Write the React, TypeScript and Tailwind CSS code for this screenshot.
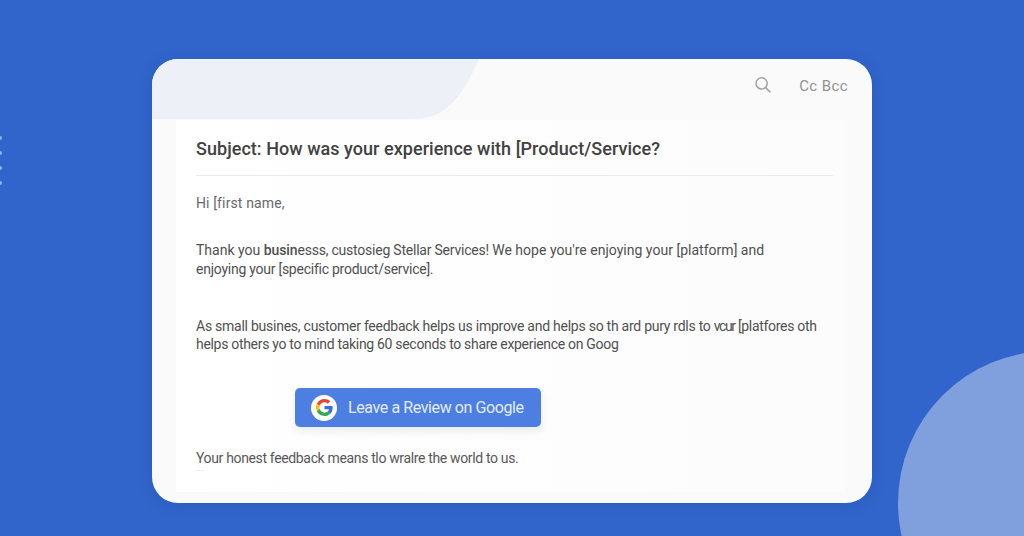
import type React from "react";

interface Segment {
  text: string;
  className: string;
}

type Line = Segment[];

const introLines: Line[] = [
  [
    { text: "Thank you ", className: "tracking-[0px]" },
    { text: "busin", className: "font-medium tracking-[-0.1px]" },
    {
      text: "esss, custosieg Stellar Services! ",
      className: "tracking-[-0.22px]",
    },
    {
      text: "We hope you're enjoying your [platform] and",
      className: "tracking-[0.02px]",
    },
  ],
  [
    {
      text: "enjoying your [specific product/service].",
      className: "tracking-[-0.25px]",
    },
  ],
];

const requestLines: Line[] = [
  [
    {
      text: "As small busines, customer feedback helps us improve and helps ",
      className: "tracking-[-0.25px]",
    },
    { text: "so th ard pury rdls to ", className: "tracking-[-0.26px]" },
    { text: "vcur", className: "tracking-[-1.4px]" },
    { text: " [platfores oth", className: "tracking-[-0.3px]" },
  ],
  [
    {
      text: "helps others yo to mind taking 60 seconds to share experience on Goog",
      className: "tracking-[-0.31px]",
    },
  ],
];

function GoogleLogo() {
  return (
    <svg viewBox="0 0 48 48" className="w-[17px] h-[17px]" aria-hidden="true">
      <path
        fill="#EA4335"
        d="M24 9.5c3.54 0 6.71 1.22 9.21 3.6l6.85-6.85C35.9 2.38 30.47 0 24 0 14.62 0 6.51 5.38 2.56 13.22l7.98 6.19C12.43 13.72 17.74 9.5 24 9.5z"
      />
      <path
        fill="#3B6FE0"
        d="M46.98 24.55c0-1.57-.15-3.09-.38-4.55H24v9.02h12.94c-.58 2.96-2.26 5.48-4.78 7.18l7.73 6c4.51-4.18 7.09-10.36 7.09-17.65z"
      />
      <path
        fill="#FBBC05"
        d="M10.53 28.59A14.5 14.5 0 0 1 9.77 24c0-1.6.27-3.14.76-4.59l-7.98-6.19A23.9 23.9 0 0 0 0 24c0 3.88.92 7.54 2.56 10.78l7.97-6.19z"
      />
      <path
        fill="#34A853"
        d="M24 48c6.48 0 11.93-2.13 15.89-5.81l-7.73-6c-2.15 1.45-4.92 2.3-8.16 2.3-6.26 0-11.57-4.22-13.47-9.91l-7.98 6.19C6.51 42.62 14.62 48 24 48z"
      />
    </svg>
  );
}

function SearchIcon() {
  return (
    <svg
      viewBox="0 0 16 16"
      className="w-4 h-4"
      fill="none"
      stroke="#a3a3a3"
      strokeWidth="1.5"
      aria-hidden="true"
    >
      <circle cx="6.6" cy="6.4" r="5.6" />
      <path d="M10.6 10.6 15.4 15.4" />
    </svg>
  );
}

function Paragraph({
  lines,
  className,
}: {
  lines: Line[];
  className: string;
}) {
  return (
    <p className={`text-[14px] text-[#505050] ${className}`}>
      {lines.map((line) => (
        <span key={line[0].text} className="block w-max whitespace-pre">
          {line.map((segment) => (
            <span key={segment.text} className={segment.className}>
              {segment.text}
            </span>
          ))}
        </span>
      ))}
    </p>
  );
}

function Backdrop({ children }: { children: React.ReactNode }) {
  return (
    <div className="relative w-[1024px] h-[536px] overflow-hidden bg-[#3265cb] font-['Roboto',sans-serif]">
      {/* Decorative circle */}
      <div className="absolute left-[898px] top-[351px] w-[304px] h-[304px] rounded-full bg-[#809fdd]" />
      {/* Dots cut off by the left edge */}
      <div className="absolute -left-[2px] top-[136px] flex flex-col gap-[11px]">
        {[0, 1, 2, 3].map((dot) => (
          <span key={dot} className="w-1 h-1 rounded-full bg-[#8db4f4]" />
        ))}
      </div>
      <div className="relative pl-[152px] pt-[59px]">{children}</div>
    </div>
  );
}

export default function App() {
  return (
    <Backdrop>
      <main className="w-[720px] h-[444px] rounded-[26px] overflow-hidden bg-[#fafafa] shadow-[0_2px_14px_rgba(20,60,150,0.25)]">
        {/* Toolbar */}
        <header className="relative h-[61px] flex items-start justify-end pr-6">
          <svg
            viewBox="0 0 330 61"
            className="absolute left-0 top-0 w-[330px] h-[61px]"
            aria-hidden="true"
          >
            <path
              d="M0 0H327C318 20 305 47 283 56C275 59 267 60 255 60H0Z"
              fill="#edf0f6"
            />
          </svg>
          <div className="mt-[18px]">
            <SearchIcon />
          </div>
          <span className="ml-7 mt-[17px] text-[15px] leading-5 text-[#929292] tracking-[0.4px] whitespace-nowrap">
            Cc Bcc
          </span>
        </header>

        {/* Message */}
        <section className="ml-6 w-[670px] h-[372px] pl-5 bg-linear-to-r from-white to-[#fcfcfc]">
          <h1 className="w-[637px] h-14 pt-[17px] border-b border-[#ebebeb] text-[18px] leading-6 font-medium text-[#414141] tracking-[0.04px] whitespace-nowrap">
            Subject: How was your experience with [Product/Service?
          </h1>
          <p className="mt-[18px] text-[14px] leading-[19px] text-[#686868] tracking-[0.13px]">
            Hi [first name,
          </p>
          <Paragraph lines={introLines} className="mt-7 leading-[19px]" />
          <Paragraph
            lines={requestLines}
            className="mt-[38px] leading-[18px]"
          />
          <button
            type="button"
            className="ml-[99px] mt-[35px] w-[246px] h-[39px] pl-4 flex items-center rounded-[5px] bg-[#4d7fe2] shadow-[0_4px_10px_rgba(0,0,0,0.08)]"
          >
            <span className="w-[26px] h-[26px] rounded-full bg-white flex items-center justify-center">
              <GoogleLogo />
            </span>
            <span className="ml-[11px] text-[16px] leading-5 text-[#e3ecfc] tracking-[-0.4px] whitespace-nowrap">
              Leave a Review on Google
            </span>
          </button>
          <p className="mt-[22px] text-[14px] leading-[19px] text-[#585858] tracking-[-0.35px]">
            Your honest feedback means tlo wralre the world to us.
          </p>
          <div className="mt-[2px] w-2 h-px bg-[#eeeeee]" />
        </section>
      </main>
    </Backdrop>
  );
}
